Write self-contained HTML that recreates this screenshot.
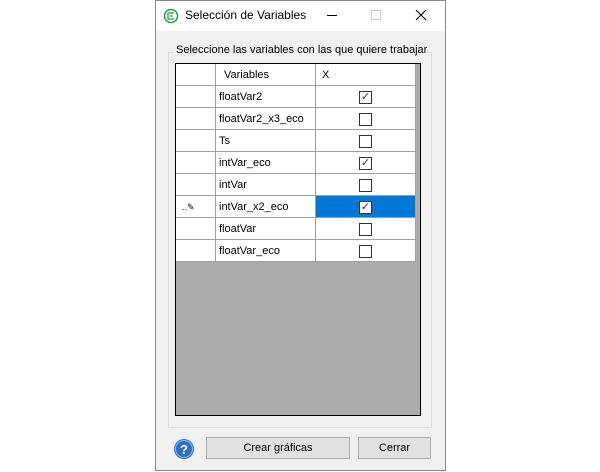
<!DOCTYPE html><html><head><style>
body{margin:0;width:600px;height:472px;background:#fff;position:relative;overflow:hidden;font-family:"Liberation Sans",sans-serif;font-size:11px;color:#000}
.a{position:absolute;box-sizing:border-box}
.win{left:155px;top:0;width:291px;height:471px;border:1px solid #888;background:#f0f0f0}
.tb{left:156px;top:1px;width:289px;height:30px;background:#fff}
.grid{left:175px;top:63px;width:246px;height:353px;border:1px solid #000;background:#ababab}
.row{position:absolute;left:0;width:240px;height:22px;background:#fff}
.c{position:absolute;top:0;height:22px;box-sizing:border-box;border-right:1px solid #a0a0a0;border-bottom:1px solid #a0a0a0;line-height:22px;padding-left:3px}
.cb{position:absolute;left:43px;top:5px;width:13px;height:13px;box-sizing:border-box;border:1px solid #333;background:#fff}
.btn{border:1px solid #adadad;background:#e1e1e1;text-align:center;line-height:20px;font-size:11px}
</style></head><body>
<div class="a win"></div>
<div class="a tb"></div>
<svg class="a" style="left:163px;top:8px" width="16" height="16" viewBox="0 0 16 16"><circle cx="8" cy="8" r="6.5" fill="none" stroke="#1aa340" stroke-width="1.5"/><path d="M5 5h6M5 5v6h6M7 8h3" stroke="#1aa340" stroke-width="1.3" fill="none"/></svg>
<div class="a" style="left:185px;top:8px;font-size:12px">Selección de Variables</div>
<div class="a" style="left:327px;top:15px;width:10px;height:1px;background:#000"></div>
<div class="a" style="left:371px;top:10px;width:10px;height:10px;border:1px solid #ccc"></div>
<svg class="a" style="left:415px;top:9px" width="12" height="12"><path d="M1 1L11 11M11 1L1 11" stroke="#000" stroke-width="1.1"/></svg>
<div class="a" style="left:168px;top:52px;width:264px;height:376px;border:1px solid #dcdcdc"></div>
<div class="a" style="left:174px;top:44px;background:#f0f0f0;padding:0 2px">Seleccione las variables con las que quiere trabajar</div>
<div class="a grid">
<div class="row" style="top:0"><div class="c" style="left:0;width:40px"></div><div class="c" style="left:40px;width:100px;padding-left:8px">Variables</div><div class="c" style="left:140px;width:100px;padding-left:6px">X</div></div>
<div class="row" style="top:22px"><div class="c" style="left:0;width:40px"></div><div class="c" style="left:40px;width:100px">floatVar2</div><div class="c" style="left:140px;width:100px"><div class="cb">✓</div></div></div>
<div class="row" style="top:44px"><div class="c" style="left:0;width:40px"></div><div class="c" style="left:40px;width:100px">floatVar2_x3_eco</div><div class="c" style="left:140px;width:100px"><div class="cb"></div></div></div>
<div class="row" style="top:66px"><div class="c" style="left:0;width:40px"></div><div class="c" style="left:40px;width:100px">Ts</div><div class="c" style="left:140px;width:100px"><div class="cb"></div></div></div>
<div class="row" style="top:88px"><div class="c" style="left:0;width:40px"></div><div class="c" style="left:40px;width:100px">intVar_eco</div><div class="c" style="left:140px;width:100px"><div class="cb">✓</div></div></div>
<div class="row" style="top:110px"><div class="c" style="left:0;width:40px"></div><div class="c" style="left:40px;width:100px">intVar</div><div class="c" style="left:140px;width:100px"><div class="cb"></div></div></div>
<div class="row" style="top:132px"><div class="c" style="left:0;width:40px;font-size:9px;padding-left:6px">..✎</div><div class="c" style="left:40px;width:100px">intVar_x2_eco</div><div class="c" style="left:140px;width:100px;background:#0078d7"><div class="cb">✓</div></div></div>
<div class="row" style="top:154px"><div class="c" style="left:0;width:40px"></div><div class="c" style="left:40px;width:100px">floatVar</div><div class="c" style="left:140px;width:100px"><div class="cb"></div></div></div>
<div class="row" style="top:176px"><div class="c" style="left:0;width:40px"></div><div class="c" style="left:40px;width:100px">floatVar_eco</div><div class="c" style="left:140px;width:100px"><div class="cb"></div></div></div>
</div>
<style>.cb{font-size:11px;line-height:11px;text-align:center;color:#333}</style>
<svg class="a" style="left:173px;top:438px" width="22" height="22"><circle cx="11" cy="11" r="10" fill="#2a6fc9"/><circle cx="11" cy="11" r="8.5" fill="none" stroke="#8fb8ef" stroke-width="1"/><text x="11" y="16" font-family="Liberation Sans" font-weight="bold" font-size="13" fill="#fff" text-anchor="middle">?</text></svg>
<div class="a btn" style="left:206px;top:437px;width:144px;height:22px">Crear gráficas</div>
<div class="a btn" style="left:358px;top:437px;width:73px;height:22px">Cerrar</div>
</body></html>
